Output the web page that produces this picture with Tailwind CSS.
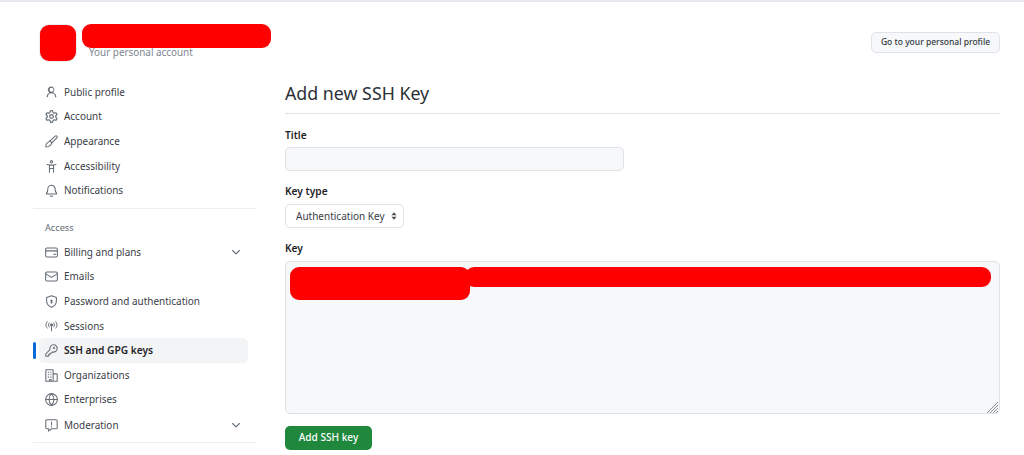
<!DOCTYPE html>
<html lang="en">
<head>
    <meta charset="UTF-8">
    <title>Add new SSH Key</title>
    <script src="https://cdn.jsdelivr.net/npm/@tailwindcss/browser@4"></script>
</head>
<body class="bg-white h-[455px] overflow-hidden font-['Noto_Sans',sans-serif] text-[#1f2328]">
    <div class="h-[455px] border-t-2 border-[#e6e8ee] pl-[33px] pr-[24px]">

        <!-- Account header -->
        <header class="h-[78px] pl-[7px] pt-[23px] flex justify-between items-start">
            <div class="relative flex">
                <div class="w-[36px] h-[36px] rounded-[9px] bg-[#ff0000] ring-1 ring-[#eceef1]"></div>
                <p class="ml-[13px] mt-[20px] text-[9.9px] leading-[14px] text-[#7d8590]">Your personal account</p>
                <div class="absolute left-[42px] top-[-1px] w-[189px] h-[24px] rounded-[9px] bg-[#ff0000]"></div>
            </div>
            <button class="mt-[7px] w-[129px] h-[21px] rounded-[5px] border border-[#dfe2e7] bg-[#f6f8fa] text-[8.5px] font-medium text-[#32383f]">Go to your personal profile</button>
        </header>

        <div class="flex">
            <!-- Sidebar -->
            <nav class="w-[223px] shrink-0 text-[9.95px] text-[#3a4047]">
                <a class="h-[24.6px] pl-[12px] flex items-center gap-[6px]">
                    <svg class="w-[13px] h-[13px] text-[#656d76]" viewBox="0 0 16 16" fill="currentColor"><path d="M10.561 8.073a6.005 6.005 0 0 1 3.432 5.142.75.75 0 1 1-1.498.07 4.5 4.5 0 0 0-8.99 0 .75.75 0 0 1-1.498-.07 6.004 6.004 0 0 1 3.431-5.142 3.999 3.999 0 1 1 4.123 0ZM10.5 4.5a2.5 2.5 0 1 0-5 0 2.5 2.5 0 0 0 5 0Z"/></svg>
                    Public profile
                </a>
                <a class="h-[24.6px] pl-[12px] flex items-center gap-[6px]">
                    <svg class="w-[13px] h-[13px] text-[#656d76]" viewBox="0 0 16 16" fill="currentColor"><path d="M8 0a8.2 8.2 0 0 1 .701.031C9.444.095 9.99.645 10.16 1.29l.288 1.107c.018.066.079.158.212.224.231.114.454.243.668.386.123.082.233.09.299.071l1.103-.303c.644-.176 1.392.021 1.82.63.27.385.506.792.704 1.218.315.675.111 1.422-.364 1.891l-.814.806c-.049.048-.098.147-.088.294.016.257.016.515 0 .772-.01.147.038.246.088.294l.814.806c.475.469.679 1.216.364 1.891a7.977 7.977 0 0 1-.704 1.217c-.428.61-1.176.807-1.82.63l-1.102-.302c-.067-.019-.177-.011-.3.071a5.909 5.909 0 0 1-.668.386c-.133.066-.194.158-.211.224l-.29 1.106c-.168.646-.715 1.196-1.458 1.26a8.006 8.006 0 0 1-1.402 0c-.743-.064-1.289-.614-1.458-1.26l-.289-1.106c-.018-.066-.079-.158-.212-.224a5.738 5.738 0 0 1-.668-.386c-.123-.082-.233-.09-.299-.071l-1.103.303c-.644.176-1.392-.021-1.82-.63a8.12 8.12 0 0 1-.704-1.218c-.315-.675-.111-1.422.363-1.891l.815-.806c.05-.048.098-.147.088-.294a6.214 6.214 0 0 1 0-.772c.01-.147-.038-.246-.088-.294l-.815-.806C.635 6.045.431 5.298.746 4.623a7.92 7.92 0 0 1 .704-1.217c.428-.61 1.176-.807 1.82-.63l1.102.302c.067.019.177.011.3-.071.214-.143.437-.272.668-.386.133-.066.194-.158.211-.224l.29-1.106C6.009.645 6.556.095 7.299.03 7.53.01 7.764 0 8 0Zm-.571 1.525c-.036.003-.108.036-.137.146l-.289 1.105c-.147.561-.549.967-.998 1.189-.173.086-.34.183-.5.29-.417.278-.97.423-1.529.27l-1.103-.303c-.109-.03-.175.016-.195.045-.22.312-.412.644-.573.99-.014.031-.021.11.059.19l.815.806c.411.406.562.957.53 1.456a4.709 4.709 0 0 0 0 .582c.032.499-.119 1.05-.53 1.456l-.815.806c-.081.08-.073.159-.059.19.162.346.353.677.573.989.02.03.085.076.195.046l1.102-.303c.56-.153 1.113-.008 1.53.27.161.107.328.204.501.29.447.222.85.629.997 1.189l.289 1.105c.029.109.101.143.137.146a6.6 6.6 0 0 0 1.142 0c.036-.003.108-.036.137-.146l.289-1.105c.147-.561.549-.967.998-1.189.173-.086.34-.183.5-.29.417-.278.97-.423 1.529-.27l1.103.303c.109.029.175-.016.195-.045.22-.313.411-.644.573-.99.014-.031.021-.11-.059-.19l-.815-.806c-.411-.406-.562-.957-.53-1.456a4.709 4.709 0 0 0 0-.582c-.032-.499.119-1.05.53-1.456l.815-.806c.081-.08.073-.159.059-.19a6.464 6.464 0 0 0-.573-.989c-.02-.03-.085-.076-.195-.046l-1.102.303c-.56.153-1.113.008-1.53-.27a4.44 4.44 0 0 0-.501-.29c-.447-.222-.85-.629-.997-1.189l-.289-1.105c-.029-.11-.101-.143-.137-.146a6.6 6.6 0 0 0-1.142 0ZM11 8a3 3 0 1 1-6 0 3 3 0 0 1 6 0ZM9.5 8a1.5 1.5 0 1 0-3.001.001A1.5 1.5 0 0 0 9.5 8Z"/></svg>
                    Account
                </a>
                <a class="h-[24.6px] pl-[12px] flex items-center gap-[6px]">
                    <svg class="w-[13px] h-[13px] text-[#656d76]" viewBox="0 0 16 16" fill="none" stroke="currentColor" stroke-width="1.3" stroke-linecap="round" stroke-linejoin="round"><path d="M14.600 1.400c-.6-.6-1.500-.5-2.100 0L6.200 7.200l2.300 2.400 6.100-6.100c.6-.6.6-1.500 0-2.100Z"/><path d="M6.200 7.200 3.300 9.300c-1.200.9-1.900 2.200-2.100 3.300-.1.900-.1 1.700-.1 2.200.8 0 2-.1 3-.5 1.300-.5 2.500-1.500 3.200-2.700l1.200-2"/></svg>
                    Appearance
                </a>
                <a class="h-[24.6px] pl-[12px] flex items-center gap-[6px]">
                    <svg class="w-[13px] h-[13px] text-[#656d76]" viewBox="0 0 16 16" fill="none" stroke="currentColor" stroke-width="1.3" stroke-linecap="round" stroke-linejoin="round"><circle cx="8" cy="2.200" r="1.400"/><path d="M2.500 5.500c3.500 1 7.500 1 11 0M5.500 6.200v8.800M10.500 6.200v8.800M5.500 10.500h5"/></svg>
                    Accessibility
                </a>
                <a class="h-[24.6px] pl-[12px] flex items-center gap-[6px]">
                    <svg class="w-[13px] h-[13px] text-[#656d76]" viewBox="0 0 16 16" fill="none" stroke="currentColor" stroke-width="1.3" stroke-linecap="round" stroke-linejoin="round"><path d="M3.500 6a4.500 4.500 0 0 1 9 0c0 2.600.6 4 1.800 5.600.2.300 0 .7-.3.7H2c-.4 0-.5-.4-.3-.7C2.900 10 3.500 8.600 3.500 6Z"/><path d="M6.500 14.800c.8.400 2.200.400 3 0"/></svg>
                    Notifications
                </a>

                <div class="mt-[5px] border-t border-[#eaecef]"></div>
                <p class="mt-[13px] h-[12px] pl-[12px] text-[9.2px] leading-[12px] text-[#656d76]">Access</p>
                <div class="h-[6px]"></div>

                <a class="h-[24.6px] pl-[12px] pr-[14px] flex items-center gap-[6px]">
                    <svg class="w-[13px] h-[13px] text-[#656d76]" viewBox="0 0 16 16" fill="none" stroke="currentColor" stroke-width="1.3" stroke-linecap="round" stroke-linejoin="round"><rect x="0.800" y="2.500" width="14.400" height="11" rx="1.500"/><path d="M1 6h14M11 10.300h1.800"/></svg>
                    Billing and plans
                    <svg class="ml-auto w-[12px] h-[12px] text-[#656d76]" viewBox="0 0 16 16" fill="none" stroke="currentColor" stroke-width="1.500" stroke-linecap="round" stroke-linejoin="round"><path d="m3.500 6 4.500 4.500L12.500 6"/></svg>
                </a>
                <a class="h-[24.6px] pl-[12px] flex items-center gap-[6px]">
                    <svg class="w-[13px] h-[13px] text-[#656d76]" viewBox="0 0 16 16" fill="none" stroke="currentColor" stroke-width="1.3" stroke-linecap="round" stroke-linejoin="round"><rect x="0.800" y="2.500" width="14.400" height="11" rx="1.500"/><path d="m1.200 4.800 6 3.900c.5.300 1.100.300 1.600 0l6-3.900"/></svg>
                    Emails
                </a>
                <a class="h-[24.6px] pl-[12px] flex items-center gap-[6px]">
                    <svg class="w-[13px] h-[13px] text-[#656d76]" viewBox="0 0 16 16" fill="none" stroke="currentColor" stroke-width="1.3" stroke-linecap="round" stroke-linejoin="round"><path d="M8 1 2 3v4.500c0 3.500 2.500 6.300 6 7.500 3.500-1.200 6-4 6-7.500V3L8 1Z"/><path d="M8 6.500v3" stroke-width="2.200"/></svg>
                    Password and authentication
                </a>
                <a class="h-[24.6px] pl-[12px] flex items-center gap-[6px]">
                    <svg class="w-[13px] h-[13px] text-[#656d76]" viewBox="0 0 16 16" fill="none" stroke="currentColor" stroke-width="1.200" stroke-linecap="round" stroke-linejoin="round"><circle cx="8" cy="6" r="1.300" fill="currentColor"/><path d="M8 7v6.500M5.200 3.500c-1.200 1.500-1.200 3.500 0 5M10.800 3.500c1.200 1.500 1.200 3.500 0 5M2.800 2c-2.200 2.500-2.200 5.500 0 8M13.200 2c2.200 2.500 2.200 5.500 0 8"/></svg>
                    Sessions
                </a>
                <a class="relative h-[24.6px] ml-[6px] pl-[6px] flex items-center gap-[6px] rounded-[5px] bg-[#f3f4f6] text-[10.2px] font-semibold text-[#1f2328] w-[209px]">
                    <span class="absolute left-[-6px] top-[4px] w-[3px] h-[17px] rounded-[2px] bg-[#0969da]"></span>
                    <svg class="w-[13px] h-[13px] text-[#656d76]" viewBox="0 0 16 16" fill="none" stroke="currentColor" stroke-width="1.3" stroke-linecap="round" stroke-linejoin="round"><path d="M10.500 1a4.500 4.500 0 0 0-4.300 5.800L1 12v3h3.200v-1.800H6V11.500h1.500l1.700-1.700A4.500 4.500 0 1 0 10.500 1Z"/><circle cx="11" cy="5" r=".6" fill="currentColor"/></svg>
                    SSH and GPG keys
                </a>
                <a class="h-[24.6px] pl-[12px] flex items-center gap-[6px]">
                    <svg class="w-[13px] h-[13px] text-[#656d76]" viewBox="0 0 16 16" fill="none" stroke="currentColor" stroke-width="1.3" stroke-linecap="round" stroke-linejoin="round"><path d="M1 15V2c0-.6.400-1 1-1h7c.6 0 1 .4 1 1v13M10 6h4c.6 0 1 .4 1 1v8M1 15h14M4 4h.5M7 4h.5M4 7h.5M7 7h.5M4 10h.5M7 10h.5M5.500 15v-2h2v2"/></svg>
                    Organizations
                </a>
                <a class="h-[24.6px] pl-[12px] flex items-center gap-[6px]">
                    <svg class="w-[13px] h-[13px] text-[#656d76]" viewBox="0 0 16 16" fill="none" stroke="currentColor" stroke-width="1.3" stroke-linecap="round" stroke-linejoin="round"><circle cx="8" cy="8" r="7.200"/><path d="M1 8h14M8 .8c-4 4-4 10.400 0 14.400M8 .8c4 4 4 10.400 0 14.400"/></svg>
                    Enterprises
                </a>
                <a class="h-[24.6px] pt-[2px] pl-[12px] pr-[14px] flex items-center gap-[6px]">
                    <svg class="w-[13px] h-[13px] text-[#656d76]" viewBox="0 0 16 16" fill="none" stroke="currentColor" stroke-width="1.3" stroke-linecap="round" stroke-linejoin="round"><path d="M2.300 1h11.400c.7 0 1.300.6 1.300 1.300v8.400c0 .7-.6 1.300-1.300 1.300H8l-3.500 3v-3H2.300C1.600 12 1 11.400 1 10.700V2.300C1 1.600 1.600 1 2.300 1Z"/><path d="M8 3.800v3.400M8 9.500v.2"/></svg>
                    Moderation
                    <svg class="ml-auto w-[12px] h-[12px] text-[#656d76]" viewBox="0 0 16 16" fill="none" stroke="currentColor" stroke-width="1.500" stroke-linecap="round" stroke-linejoin="round"><path d="m3.500 6 4.500 4.500L12.500 6"/></svg>
                </a>
                <div class="mt-[5px] border-t border-[#eaecef]"></div>
            </nav>

            <!-- Form -->
            <main class="ml-[29px] flex-1">
                <h1 class="h-[34px] border-b border-[#dfe2e7] text-[17.8px] leading-[26px] text-[#2b3036]">Add new SSH Key</h1>

                <label class="block mt-[14px] h-[14px] text-[10.2px] leading-[14px] font-semibold">Title</label>
                <input type="text" class="block mt-[5px] w-[339px] h-[24px] rounded-[5px] border border-[#dfe2e7] bg-[#f6f8fa]">

                <label class="block mt-[13px] h-[14px] text-[10.2px] leading-[14px] font-semibold">Key type</label>
                <div class="relative mt-[6px] w-[119px] h-[24px]">
                    <select class="appearance-none block w-full h-full pl-[10px] rounded-[5px] border border-[#dfe2e7] bg-white text-[10px] text-[#3a4047]">
                        <option>Authentication Key</option>
                    </select>
                    <svg class="absolute right-[7px] top-[8px] w-[6px] h-[8px] text-[#4b5259]" viewBox="0 0 8 10" fill="currentColor"><path d="M4 0 7.500 4H.5ZM4 10 .5 6h7Z"/></svg>
                </div>

                <label class="block mt-[13px] h-[14px] text-[10.2px] leading-[14px] font-semibold">Key</label>
                <div class="relative mt-[6px]">
                    <textarea class="block w-full h-[153px] rounded-[5px] border border-[#dfe2e7] bg-[#f6f8fa] resize-none"></textarea>
                    <div class="absolute left-[5px] top-[6px] w-[180px] h-[33px] rounded-[9px] bg-[#ff0000]"></div>
                    <div class="absolute left-[180px] right-[9px] top-[6px] h-[20px] rounded-[9px] bg-[#ff0000]"></div>
                    <svg class="absolute right-[2px] bottom-[1px] w-[11px] h-[11px] text-[#8c9096]" viewBox="0 0 11 11" fill="none" stroke="currentColor" stroke-width="1"><path d="M0 11 11 0M3 11l8-8M6 11l5-5M9 11l2-2"/></svg>
                </div>

                <button class="block mt-[12px] w-[87px] h-[24px] rounded-[5px] bg-[#1f883d] text-white text-[10.1px] font-medium">Add SSH key</button>
            </main>
        </div>
    </div>
</body>
</html>
